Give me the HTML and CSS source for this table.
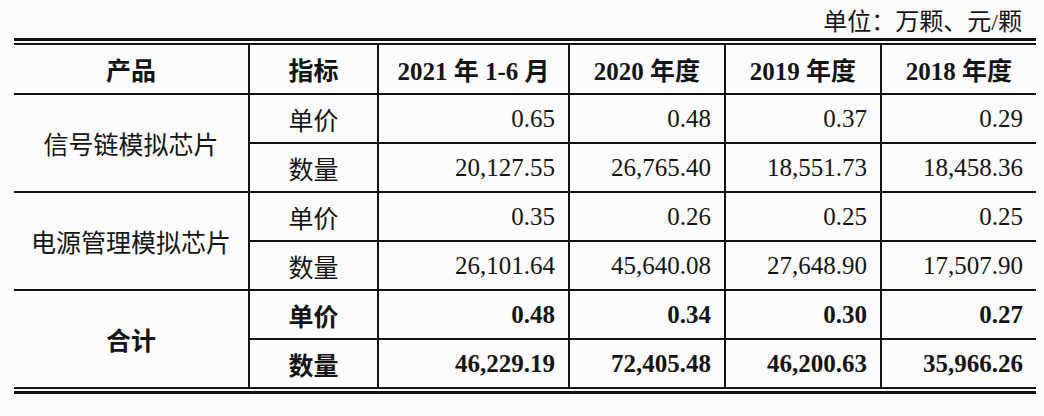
FILE: index.html
```html
<!DOCTYPE html>
<html lang="zh">
<head>
<meta charset="utf-8">
<link rel="stylesheet" href="styles.css">
</head>
<body>
<div class="page">
  <div class="unit">单位：万颗、元/颗</div>
  <div class="frame">
    <table class="data">
      <colgroup>
        <col class="c-prod"><col class="c-ind"><col class="c-y"><col class="c-y2"><col class="c-y2"><col class="c-y3">
      </colgroup>
      <thead>
        <tr>
          <th>产品</th>
          <th>指标</th>
          <th>2021 年 1-6 月</th>
          <th>2020 年度</th>
          <th>2019 年度</th>
          <th>2018 年度</th>
        </tr>
      </thead>
      <tbody>
        <tr>
          <td class="prod" rowspan="2">信号链模拟芯片</td>
          <td class="ind">单价</td>
          <td class="num">0.65</td><td class="num">0.48</td><td class="num">0.37</td><td class="num">0.29</td>
        </tr>
        <tr>
          <td class="ind">数量</td>
          <td class="num">20,127.55</td><td class="num">26,765.40</td><td class="num">18,551.73</td><td class="num">18,458.36</td>
        </tr>
        <tr>
          <td class="prod" rowspan="2">电源管理模拟芯片</td>
          <td class="ind">单价</td>
          <td class="num">0.35</td><td class="num">0.26</td><td class="num">0.25</td><td class="num">0.25</td>
        </tr>
        <tr>
          <td class="ind">数量</td>
          <td class="num">26,101.64</td><td class="num">45,640.08</td><td class="num">27,648.90</td><td class="num">17,507.90</td>
        </tr>
        <tr class="total">
          <td class="prod" rowspan="2">合计</td>
          <td class="ind">单价</td>
          <td class="num">0.48</td><td class="num">0.34</td><td class="num">0.30</td><td class="num">0.27</td>
        </tr>
        <tr class="total">
          <td class="ind">数量</td>
          <td class="num">46,229.19</td><td class="num">72,405.48</td><td class="num">46,200.63</td><td class="num">35,966.26</td>
        </tr>
      </tbody>
    </table>
  </div>
</div>
</body>
</html>
```
FILE: styles.css
```css
html, body {
  margin: 0;
  padding: 0;
  background: #fcfcfc;
}
body {
  font-family: "Liberation Serif", "Noto Sans CJK SC", serif;
  color: #141414;
}
.page {
  margin: 0 8px 0 14px;
}
.unit {
  height: 32px;
  padding-top: 6px;
  line-height: 32px;
  font-size: 24px;
  text-align: right;
  padding-right: 14px;
  box-sizing: content-box;
}
.frame {
  border-top: 3px solid #111;
  border-bottom: 3px solid #111;
  padding: 2px 0;
}
.data {
  width: 100%;
  border-collapse: collapse;
  table-layout: fixed;
  font-size: 25px;
  border-top: 2px solid #111;
  border-bottom: 2px solid #111;
}
.c-prod { width: 235px; }
.c-ind { width: 129px; }
.c-y { width: 191px; }
.c-y2 { width: 156px; }
.c-y3 { width: auto; }
.data th, .data td {
  border: 2px solid #111;
  padding: 0;
  height: 47px;
  vertical-align: middle;
}
.data tr > :first-child { border-left: none; }
.data tr > :last-child { border-right: none; }
.data thead tr > * { border-top: none; }
.data tbody tr:last-child > *, .data tbody tr.total .prod { border-bottom: none; }
.data th {
  font-weight: 700;
  text-align: center;
  height: 48px;
}
.data td.prod, .data td.ind {
  text-align: center;
  font-weight: 400;
}
.data td.num {
  text-align: right;
  padding-right: 13px;
}
.data tr.total td {
  font-weight: 700;
}
```
